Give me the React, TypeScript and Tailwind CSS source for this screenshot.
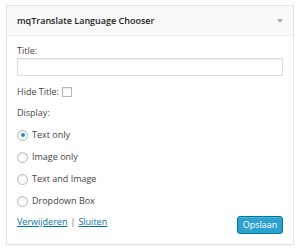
import React from "react";

const Radio = ({ checked, label }: { checked?: boolean; label: string }) => (
  <label className="flex items-center gap-[4px] h-[22px]">
    <span className="w-[11px] h-[11px] rounded-full border border-[#b4b9be] bg-white shadow-[inset_0_1px_2px_rgba(0,0,0,0.1)] flex items-center justify-center">
      {checked && <span className="w-[4px] h-[4px] rounded-full bg-[#1e8cbe]" />}
    </span>
    <span>{label}</span>
  </label>
);

export default function App() {
  return (
    <div className="w-[300px] h-[249px] bg-white pt-[5px] px-[6px]" style={{ fontFamily: '"Open Sans", sans-serif' }}>
      <div className="border border-[#e5e5e5] bg-white shadow-[0_1px_1px_rgba(0,0,0,0.04)] text-[9px] text-[#444]">
        <div className="h-[30px] bg-[#f9f9f9] border-b border-[#eee] flex items-center justify-between pl-[10px] pr-[10px]">
          <span className="font-semibold text-[9px] text-[#222]">mqTranslate Language Chooser</span>
          <span className="w-0 h-0 border-l-[3px] border-r-[3px] border-t-[4px] border-l-transparent border-r-transparent border-t-[#aaa]" />
        </div>
        <div className="px-[10px] pt-[9px] pb-[10px]">
          <div className="leading-[12px]">Title:</div>
          <div className="mt-[1px] h-[18px] border border-[#ddd] shadow-[inset_0_1px_2px_rgba(0,0,0,0.07)]" />
          <div className="mt-[10px] flex items-center gap-[3px] h-[12px] leading-[12px]">
            <span>Hide Title:</span>
            <span className="w-[10px] h-[10px] border border-[#b4b9be] shadow-[inset_0_1px_2px_rgba(0,0,0,0.1)]" />
          </div>
          <div className="mt-[9px] leading-[12px]">Display:</div>
          <div className="mt-[5px] flex flex-col">
            <Radio checked label="Text only" />
            <Radio label="Image only" />
            <Radio label="Text and Image" />
            <Radio label="Dropdown Box" />
          </div>
          <div className="mt-[4px] flex items-start justify-between">
            <div className="leading-[12px] text-[#0074a2]">
              <a className="underline">Verwijderen</a>
              <span className="text-[#666] mx-[3px]">|</span>
              <a className="underline">Sluiten</a>
            </div>
            <button className="h-[18px] w-[46px] rounded-[3px] bg-[#2ea2cc] border border-[#0074a2] text-white text-[9px] leading-[16px] shadow-[inset_0_1px_0_rgba(120,200,230,0.5)]">
              Opslaan
            </button>
          </div>
        </div>
      </div>
    </div>
  );
}
